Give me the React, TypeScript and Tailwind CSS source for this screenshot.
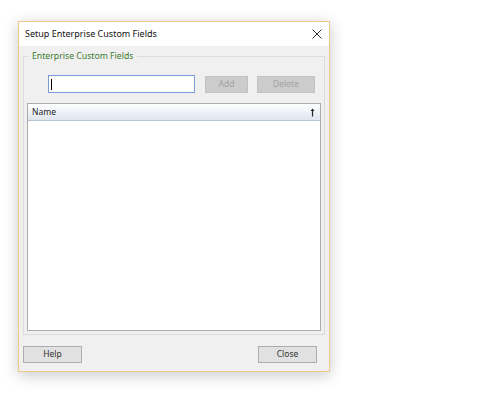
export default function App() {
  return (
    <div className="w-[488px] h-[394px] bg-white pt-[21px] pl-[18px]" style={{ fontFamily: '"Noto Sans", Arial, sans-serif' }}>
      <div className="w-[312px] h-[351px] border border-[#f2c88a] bg-[#f0f0f0] flex flex-col shadow-[0_3px_14px_rgba(0,0,0,0.22)]">
        {/* title bar */}
        <div className="h-[24px] bg-white flex items-center justify-between pl-[6px] pr-[7px] text-[9px] text-[#111]">
          <span>Setup Enterprise Custom Fields</span>
          <svg width="10" height="10" viewBox="0 0 10 10" className="stroke-[#333]">
            <path d="M0.5 0.5 L9.5 9.5 M9.5 0.5 L0.5 9.5" strokeWidth="1" />
          </svg>
        </div>

        <div className="flex-1 flex flex-col px-[4px]">
          <fieldset className="mt-[4px] h-[285px] border border-[#dcdcdc] px-[3px] pb-[3px]">
            <legend className="ml-[2px] px-[3px] text-[8.7px] leading-[12px] text-[#3f7a33]">Enterprise Custom Fields</legend>
            <div className="flex items-center h-[18px] mt-[13px]">
              <div className="ml-[21px] w-[147px] h-[18px] border border-[#7a9ad8] bg-white flex items-center pl-[2px]">
                <div className="w-px h-[11px] bg-black" />
              </div>
              <button className="ml-[10px] w-[43px] h-[17px] border border-[#c2c2c2] bg-[#cccccc] text-[8.5px] text-[#a3a3a3] leading-none">Add</button>
              <button className="ml-[9px] w-[58px] h-[17px] border border-[#c2c2c2] bg-[#cccccc] text-[8.5px] text-[#a3a3a3] leading-none">Delete</button>
            </div>
            <div className="mt-[10px] h-[228px] border border-[#acacac] bg-white">
              <div className="h-[17px] bg-gradient-to-b from-white to-[#dfe5ef] border-b border-[#b8c3d6] flex items-center justify-between pl-[4px] pr-[5px] text-[8.5px] text-[#222]">
                <span>Name</span>
                <svg width="5" height="9" viewBox="0 0 5 9">
                  <path d="M2.5 0.5 L0.5 3 L4.5 3 Z" fill="#222" />
                  <path d="M2.5 2 V8.5" stroke="#222" strokeWidth="1.2" />
                </svg>
              </div>
            </div>
          </fieldset>

          <div className="mt-[11px] flex justify-between">
            <button className="w-[59px] h-[17px] border border-[#adadad] bg-[#e1e1e1] text-[8.5px] text-[#333] leading-none">Help</button>
            <button className="mr-[8px] w-[59px] h-[17px] border border-[#adadad] bg-[#e1e1e1] text-[8.5px] text-[#333] leading-none">Close</button>
          </div>
        </div>
      </div>
    </div>
  );
}
